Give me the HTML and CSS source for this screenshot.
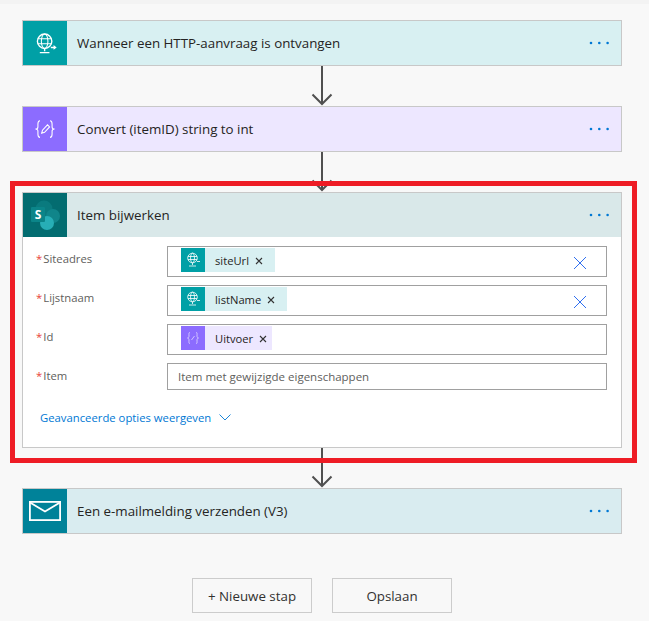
FILE: index.html
```html
<!DOCTYPE html>
<html lang="en">
<head>
  <meta charset="UTF-8" />
  <meta name="viewport" content="width=device-width, initial-scale=1.0"/>
  <title>Flow editor</title>
  <link rel="stylesheet" href="styles.css">
</head>
<body>
  <div class="flow">

    <!-- Trigger -->
    <div class="card card-http">
      <div class="card-head">
        <div class="card-icon">
          <svg class="icon-globe" width="22" height="22" viewBox="0 0 32 32" fill="none" stroke="#fff" stroke-width="1.500">
            <circle cx="14" cy="12" r="10.500" stroke-width="2"/>
            <ellipse cx="14" cy="12" rx="4.800" ry="10.500"/>
            <path d="M4 8.500h20M4 15.500h20"/>
            <path d="M14 22.500v4M7 28.500h14M23 21h6" stroke-width="2"/>
            <path d="M27 17.500l4.500 3.500-4.500 3.500z" fill="#fff" stroke="none"/>
          </svg>
        </div>
        <div class="card-title">Wanneer een HTTP-aanvraag is ontvangen</div>
        <svg class="dots" width="20" height="4" viewBox="0 0 20 4" fill="#0078d4"><circle cx="2" cy="2" r="1.3"/><circle cx="10.3" cy="2" r="1.3"/><circle cx="18.6" cy="2" r="1.3"/></svg>
      </div>
    </div>

    <div class="connector">
      <svg width="24" height="40" viewBox="0 0 24 40" fill="none" stroke="#505050" stroke-width="2"><path d="M12 0v38M2.500 28.500l9.500 9.500 9.500-9.500"/></svg>
    </div>

    <!-- Convert -->
    <div class="card card-var">
      <div class="card-head">
        <div class="card-icon">
          <svg width="22" height="20" viewBox="0 0 26 24" fill="none" stroke="#fff" stroke-width="1.300">
            <path d="M7 2C4.500 2 4.500 3.500 4.500 6v3.500C4.500 11 3.500 12 1.500 12c2 0 3 1 3 2.500V18c0 2.500 0 4 2.500 4"/>
            <path d="M19 2c2.500 0 2.500 1.500 2.500 4v3.500c0 1.500 1 2.500 3 2.500-2 0-3 1-3 2.500V18c0 2.500 0 4-2.500 4"/>
            <path d="M9 17l1-3.500 6-6.500 2.500 2.500-6 6.500z"/>
          </svg>
        </div>
        <div class="card-title">Convert (itemID) string to int</div>
        <svg class="dots" width="20" height="4" viewBox="0 0 20 4" fill="#0078d4"><circle cx="2" cy="2" r="1.3"/><circle cx="10.3" cy="2" r="1.3"/><circle cx="18.6" cy="2" r="1.3"/></svg>
      </div>
    </div>

    <div class="connector">
      <svg width="24" height="40" viewBox="0 0 24 40" fill="none" stroke="#505050" stroke-width="2"><path d="M12 0v38M2.500 28.500l9.500 9.500 9.500-9.500"/></svg>
    </div>

    <!-- SharePoint action, expanded -->
    <div class="card card-sp">
      <div class="card-head">
        <div class="card-icon">
          <svg width="32" height="32" viewBox="0 0 32 32">
            <circle cx="15" cy="10" r="8.500" fill="#0a7a7e"/>
            <circle cx="24" cy="17" r="7" fill="#10858a"/>
            <circle cx="18" cy="24" r="7" fill="#27aeb6"/>
            <rect x="2" y="8" width="14" height="15" rx="1" fill="#0b8589"/>
            <text x="9" y="20" class="sp-letter">S</text>
          </svg>
        </div>
        <div class="card-title">Item bijwerken</div>
        <svg class="dots" width="20" height="4" viewBox="0 0 20 4" fill="#0078d4"><circle cx="2" cy="2" r="1.3"/><circle cx="10.3" cy="2" r="1.3"/><circle cx="18.6" cy="2" r="1.3"/></svg>
      </div>

      <div class="card-body">
        <div class="row">
          <label class="label"><span class="req">*</span>Siteadres</label>
          <div class="field">
            <span class="chip chip-http">
              <span class="chip-icon">
                <svg width="16" height="16" viewBox="0 0 16 16" fill="none" stroke="#fff" stroke-width=".8"><circle cx="7.500" cy="6" r="4.800"/><ellipse cx="7.500" cy="6" rx="2" ry="4.800"/><path d="M3 4.500h9M3 7.500h9M7.500 11v2M4 14h7M12 9.500h3"/></svg>
              </span>
              <span class="chip-text">siteUrl</span>
              <svg class="chip-x" width="8" height="8" viewBox="0 0 8 8" stroke="#333" stroke-width="1.100"><path d="M1 1l6 6M7 1l-6 6"/></svg>
            </span>
            <svg class="clear" width="12" height="12" viewBox="0 0 12 12" stroke="#2f6ff0" stroke-width="1"><path d="M0 0l12 12M12 0L0 12"/></svg>
          </div>
        </div>
        <div class="row">
          <label class="label"><span class="req">*</span>Lijstnaam</label>
          <div class="field">
            <span class="chip chip-http">
              <span class="chip-icon">
                <svg width="16" height="16" viewBox="0 0 16 16" fill="none" stroke="#fff" stroke-width=".8"><circle cx="7.500" cy="6" r="4.800"/><ellipse cx="7.500" cy="6" rx="2" ry="4.800"/><path d="M3 4.500h9M3 7.500h9M7.500 11v2M4 14h7M12 9.500h3"/></svg>
              </span>
              <span class="chip-text">listName</span>
              <svg class="chip-x" width="8" height="8" viewBox="0 0 8 8" stroke="#333" stroke-width="1.100"><path d="M1 1l6 6M7 1l-6 6"/></svg>
            </span>
            <svg class="clear" width="12" height="12" viewBox="0 0 12 12" stroke="#2f6ff0" stroke-width="1"><path d="M0 0l12 12M12 0L0 12"/></svg>
          </div>
        </div>
        <div class="row">
          <label class="label"><span class="req">*</span>Id</label>
          <div class="field">
            <span class="chip chip-var">
              <span class="chip-icon">
                <svg width="14" height="14" viewBox="0 0 14 14" fill="none" stroke="#d9ceff" stroke-width=".9"><path d="M4 1.500C2.500 1.500 3 3 3 5 3 6 2.500 7 1.500 7c1 0 1.500 1 1.500 2 0 2-.5 3.500 1 3.500M10 1.500c1.500 0 1 1.500 1 3.500 0 1 .5 2 1.500 2-1 0-1.500 1-1.500 2 0 2 .5 3.500-1 3.500M5.500 9l3-4"/></svg>
              </span>
              <span class="chip-text">Uitvoer</span>
              <svg class="chip-x" width="8" height="8" viewBox="0 0 8 8" stroke="#333" stroke-width="1.100"><path d="M1 1l6 6M7 1l-6 6"/></svg>
            </span>
          </div>
        </div>
        <div class="row">
          <label class="label"><span class="req">*</span>Item</label>
          <div class="field field-text">Item met gewijzigde eigenschappen</div>
        </div>

        <div class="advanced">
          <span>Geavanceerde opties weergeven</span>
          <svg width="12" height="7" viewBox="0 0 12 7" fill="none" stroke="#0078d4" stroke-width=".9"><path d="M.5.500L6 6l5.500-5.500"/></svg>
        </div>
      </div>
    </div>

    <div class="connector">
      <svg width="24" height="40" viewBox="0 0 24 40" fill="none" stroke="#505050" stroke-width="2"><path d="M12 0v38M2.500 28.500l9.500 9.500 9.500-9.500"/></svg>
    </div>

    <!-- Mail -->
    <div class="card card-mail">
      <div class="card-head">
        <div class="card-icon">
          <svg width="32" height="20" viewBox="0 0 32 20" fill="none" stroke="#fff" stroke-width="1.800"><rect x=".9" y=".9" width="30.200" height="18.200"/><path d="M1 1.500l15 9 15-9"/></svg>
        </div>
        <div class="card-title">Een e-mailmelding verzenden (V3)</div>
        <svg class="dots" width="20" height="4" viewBox="0 0 20 4" fill="#0078d4"><circle cx="2" cy="2" r="1.3"/><circle cx="10.3" cy="2" r="1.3"/><circle cx="18.6" cy="2" r="1.3"/></svg>
      </div>
    </div>

    <div class="actions">
      <button class="btn">+ Nieuwe stap</button>
      <button class="btn">Opslaan</button>
    </div>
  </div>

  <!-- Annotation drawn over the screenshot -->
  <div class="highlight"></div>
</body>
</html>
```

FILE: styles.css
```css
/* Base Styles */
body {
  font-family: "Open Sans", "Noto Sans", sans-serif;
  margin: 0;
  height: 621px;
  overflow: hidden;
  background-color: #f8f8f8;
  border-top: 4px solid #f3f3f3;
  box-sizing: border-box;
  color: #252423;
}

.flow {
  width: 600px;
  margin-left: 22px;
  padding-top: 16px;
}

/* Cards */
.card {
  border: 1px solid #c8c8c8;
  box-sizing: border-box;
}
.card-head {
  display: flex;
  align-items: center;
  height: 44px;
}
.card-icon {
  width: 44px;
  height: 44px;
  display: flex;
  align-items: center;
  justify-content: center;
  flex-shrink: 0;
}
.icon-globe {
  margin: 1px 0 0 1px;
}
.card-title {
  flex: 1;
  margin-left: 10px;
  font-size: 13.330px;
}
.dots {
  margin-right: 12px;
}

.card-http .card-head { background: #d8f0f2; }
.card-http .card-icon { background: #00a0a6; }
.card-var .card-head { background: #ede7ff; }
.card-var .card-icon { background: #8c6cff; }
.card-sp { background: #fff; }
.card-sp .card-head { background: #d9e8e9; }
.card-sp .card-icon { background: #036c70; }
.card-mail .card-head { background: #d9ecf0; }
.card-mail .card-icon { background: #008299; }

.sp-letter {
  font-size: 12px;
  font-weight: 700;
  fill: #fff;
  text-anchor: middle;
}

.connector {
  height: 40px;
  display: flex;
  justify-content: center;
}

/* Form */
.card-body {
  padding: 9px 14px 0 13px;
  height: 210px;
  box-sizing: border-box;
}
.row {
  display: flex;
  margin-bottom: 8px;
}
.label {
  width: 131px;
  flex-shrink: 0;
  font-size: 11.300px;
  line-height: 26px;
  color: #605e5c;
}
.req {
  color: #e8443a;
  margin-right: 1px;
}
.field {
  flex: 1;
  height: 31px;
  box-sizing: border-box;
  border: 1px solid #a0a0a0;
  display: flex;
  align-items: flex-start;
  justify-content: space-between;
  padding: 1px 20px 0 13px;
}
.field-text {
  height: 27px;
  padding: 0 0 0 10px;
  align-items: center;
  font-size: 11.500px;
  color: #605e5c;
}

.chip {
  display: flex;
  align-items: center;
  height: 24px;
  font-size: 11.200px;
  padding-right: 12px;
}
.chip-http { background: #d8f0f2; }
.chip-var {
  background: #ede7ff;
  padding-right: 5px;
}
.chip-icon {
  width: 24px;
  height: 24px;
  display: flex;
  align-items: center;
  justify-content: center;
  margin-right: 10px;
}
.chip-http .chip-icon { background: #00a0a6; }
.chip-var .chip-icon { background: #8c6cff; }
.chip-x {
  margin: 2px 0 0 6px;
}
.clear {
  margin-top: 9px;
}

.advanced {
  display: flex;
  align-items: center;
  gap: 8px;
  margin: 20px 0 0 4px;
  font-size: 11.300px;
  color: #0078d4;
}

/* Buttons */
.actions {
  display: flex;
  justify-content: center;
  gap: 20px;
  margin-top: 44px;
}
.btn {
  width: 120px;
  height: 35px;
  border: 1px solid #ccc;
  background: #f8f8f8;
  font-family: inherit;
  font-size: 13.330px;
  color: #323130;
}

/* Red annotation box */
.highlight {
  position: absolute;
  left: 10px;
  top: 181px;
  width: 627px;
  height: 282px;
  box-sizing: border-box;
  border: 5px solid #ee1c25;
}
```
